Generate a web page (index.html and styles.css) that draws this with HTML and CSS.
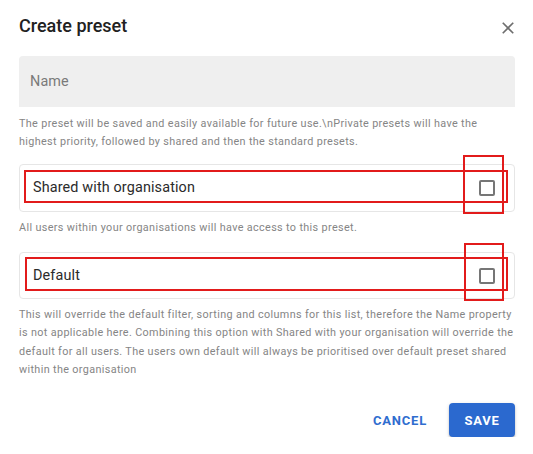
FILE: index.html
```html
<!DOCTYPE html>
<html lang="en">
<head>
<meta charset="utf-8">
<title>Create preset</title>
<link rel="stylesheet" href="styles.css">
</head>
<body>
<div class="dialog">
  <div class="header">
    <h2 class="title">Create preset</h2>
    <svg class="close" viewBox="0 0 24 24" width="20" height="20" aria-label="Close"><path d="M19 6.41 17.59 5 12 10.59 6.41 5 5 6.41 10.59 12 5 17.59 6.41 19 12 13.41 17.59 19 19 17.59 13.41 12z"/></svg>
  </div>
  <div class="field"><span class="placeholder">Name</span></div>
  <p class="help help-name">The preset will be saved and easily available for future use.\nPrivate presets will have the highest priority, followed by shared and then the standard presets.</p>

  <div class="option option-shared">
    <span class="label">Shared with organisation</span>
    <span class="checkbox"></span>
    <span class="mark mark-wide"></span>
    <span class="mark mark-tall"></span>
  </div>
  <p class="help help-shared">All users within your organisations will have access to this preset.</p>

  <div class="option option-default">
    <span class="label">Default</span>
    <span class="checkbox"></span>
    <span class="mark mark-wide"></span>
    <span class="mark mark-tall"></span>
  </div>
  <p class="help help-default">This will override the default filter, sorting and columns for this list, therefore the Name property is not applicable here. Combining this option with Shared with your organisation will override the default for all users. The users own default will always be prioritised over default preset shared within the organisation</p>

  <div class="actions">
    <button class="btn btn-text">CANCEL</button>
    <button class="btn btn-primary">SAVE</button>
  </div>
</div>
</body>
</html>
```

FILE: styles.css
```css
* { box-sizing: border-box; }
html, body { margin: 0; padding: 0; background: #fff; }
body { font-family: Roboto, "Liberation Sans", Arial, sans-serif; color: rgba(0,0,0,0.87); }

.dialog {
  width: 533px;
  padding: 14px 18px 0 19px;
}

.header {
  display: flex;
  align-items: center;
  justify-content: space-between;
  height: 24px;
}
.title {
  margin: 0;
  font-size: 18px;
  font-weight: 500;
  line-height: 24px;
  color: #212121;
}
.close {
  fill: #6e6e6e;
  margin-right: -3px;
  margin-top: 3px;
}

.field {
  margin-top: 18px;
  height: 51px;
  background: #efefef;
  border-radius: 4px 4px 0 0;
  padding: 15px 0 0 11px;
}
.placeholder {
  font-size: 14.4px;
  letter-spacing: 0.135px;
  line-height: 18px;
  color: #7a7a7a;
}

.help {
  margin: 0;
  font-size: 10.8px;
  letter-spacing: 0.36px;
  line-height: 18px;
  color: #858585;
}
.help-name { margin-top: 8px; }
.help-shared { margin-top: 7px; }
.help-default { margin-top: 7px; line-height: 18.3px; }

.option {
  position: relative;
  display: flex;
  align-items: center;
  justify-content: space-between;
  height: 48px;
  border: 1px solid #e6e6e6;
  border-radius: 4px;
  padding: 0 19px 0 13px;
}
.option-shared { margin-top: 13px; }
.option-default { margin-top: 15px; height: 47px; }

.label {
  font-size: 14.4px;
  letter-spacing: 0.135px;
  line-height: 18px;
  color: #2b2b2b;
}
.checkbox {
  width: 16px;
  height: 16px;
  border: 2px solid #767676;
  border-radius: 2px;
}

.mark {
  position: absolute;
  border: 2px solid #e21b1b;
}
.option-shared .mark-wide { left: 4px; top: 5px; width: 484px; height: 33px; }
.option-shared .mark-tall { left: 443px; top: -10px; width: 41px; height: 59px; }
.option-default .mark-wide { left: 5px; top: 4px; width: 483px; height: 34px; }
.option-default .mark-tall { left: 444px; top: -10px; width: 40px; height: 58px; }

.actions {
  display: flex;
  justify-content: flex-end;
  align-items: center;
  gap: 6px;
  margin-top: 24px;
}
.btn {
  font-family: inherit;
  font-size: 13px;
  font-weight: 700;
  letter-spacing: 0.8px;
  height: 34px;
  border: none;
  border-radius: 4px;
  cursor: pointer;
}
.btn-text {
  background: transparent;
  color: #2f6dcf;
  padding: 0 16px;
}
.btn-primary {
  width: 66px;
  padding: 0;
  background: #2b69cf;
  color: #fff;
  box-shadow: 0 2px 2px rgba(0,0,0,0.18), 0 1px 4px rgba(0,0,0,0.12);
}
```
